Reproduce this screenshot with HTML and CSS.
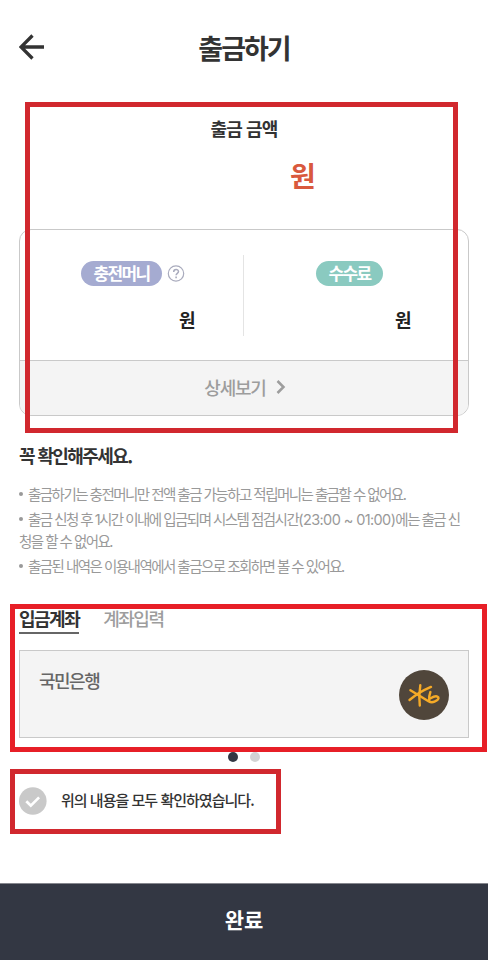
FILE: index.html
```html
<!DOCTYPE html>
<html lang="ko">
<head>
    <meta charset="UTF-8">
    <meta name="viewport" content="width=device-width, initial-scale=1.0">
    <title>출금하기</title>
    <link rel="stylesheet" href="styles.css">
</head>
<body>
    <div class="screen">
        <header class="header">
            <svg class="back" viewBox="0 0 26 26" width="26" height="26">
                <path d="M25 13H2.5M13.5 1.5L2 13l11.5 11.5" fill="none" stroke="#333" stroke-width="3.3"/>
            </svg>
            <h1>출금하기</h1>
        </header>

        <main class="content">
            <section class="amount">
                <h2>출금 금액</h2>
                <p class="total">원</p>
            </section>

            <section class="card">
                <div class="card-body">
                    <div class="card-col">
                        <div class="label-row">
                            <span class="pill pill-money">충전머니</span>
                            <svg class="help" viewBox="0 0 18 18" width="18" height="18" fill="none" stroke="#a9abbd">
                                <circle cx="9" cy="8.5" r="7.7" stroke-width="1.2"/>
                                <path d="M6.7 6.9C6.7 3.7 11.5 3.8 11.5 6.6C11.5 8.4 9.1 8.4 9.1 10.3" stroke-width="1.5"/>
                                <path d="M9.1 11.5v1.7" stroke-width="1.6"/>
                            </svg>
                        </div>
                        <p class="won">원</p>
                    </div>
                    <div class="card-col">
                        <div class="label-row">
                            <span class="pill pill-fee">수수료</span>
                        </div>
                        <p class="won">원</p>
                    </div>
                </div>
                <div class="card-more">
                    <span>상세보기</span>
                    <svg viewBox="0 0 10 14" width="10" height="14">
                        <path d="M1.5 1l6 6-6 6" fill="none" stroke="#9d9d9d" stroke-width="2.5"/>
                    </svg>
                </div>
            </section>

            <section class="notice">
                <h3>꼭 확인해주세요.</h3>
                <ul>
                    <li>출금하기는 충전머니만 전액 출금 가능하고 적립머니는 출금할 수 없어요.</li>
                    <li>출금 신청 후 1시간 이내에 입금되며 시스템 점검시간<span class="hours">(23:00 ~ 01:00)</span>에는 출금 신<br>청을 할 수 없어요.</li>
                    <li>출금된 내역은 이용내역에서 출금으로 조회하면 볼 수 있어요.</li>
                </ul>
            </section>

            <nav class="tabs">
                <span class="tab active">입금계좌</span>
                <span class="tab">계좌입력</span>
            </nav>

            <section class="bank">
                <span class="bank-name">국민은행</span>
                <svg class="bank-logo" viewBox="0 0 50 50" width="50" height="50">
                    <circle cx="25" cy="25" r="25" fill="#50463b"/>
                    <g fill="none" stroke="#f5aa27" stroke-width="2.4" stroke-linecap="round">
                        <path d="M21.3 15.2C20.2 22 20 29 20.8 35.5"/>
                        <path d="M11.4 20.2L29.5 31.2Q32.5 33 35.5 31.6Q40.4 29.6 39.3 27.3Q37.3 24.8 31.6 28.3"/>
                        <path d="M32 16.9Q20 22 10.5 30"/>
                        <path d="M31.4 22Q29.8 26 30.2 30.6"/>
                    </g>
                </svg>
            </section>

            <div class="dots">
                <span class="dot on"></span>
                <span class="dot"></span>
            </div>

            <div class="agree">
                <svg viewBox="0 0 28 28" width="28" height="28">
                    <circle cx="13.8" cy="14" r="13.8" fill="#c9c9c9"/>
                    <path d="M7.3 14.2l4.5 4.5 8.3-8.3" fill="none" stroke="#fff" stroke-width="2.7"/>
                </svg>
                <span>위의 내용을 모두 확인하였습니다.</span>
            </div>
        </main>

        <footer class="submit">완료</footer>

        <!-- highlight frames -->
        <div class="frame frame-amount"></div>
        <div class="frame frame-bank"></div>
        <div class="frame frame-agree"></div>
    </div>
</body>
</html>
```
FILE: styles.css
```css
* {
    box-sizing: border-box;
    margin: 0;
    padding: 0;
}

body {
    background-color: #fff;
    color: #333;
    font-family: 'Noto Sans CJK KR', sans-serif;
}

.screen {
    position: relative;
    display: flex;
    flex-direction: column;
    width: 488px;
    height: 960px;
    overflow: hidden;
}

.header {
    display: grid;
    grid-template-columns: 60px 1fr 60px;
    align-items: center;
    height: 96px;
    padding-bottom: 2px;
}

.back {
    margin-left: 19px;
}

h1 {
    padding-top: 1px;
    text-align: center;
    font-size: 27px;
    line-height: 40px;
    font-weight: 700;
    letter-spacing: -2px;
}

.content {
    flex: 1;
    padding: 0 19px;
}

.amount {
    height: 133px;
    padding-top: 17px;
    text-align: center;
}

h2 {
    font-size: 18px;
    line-height: 30px;
    font-weight: 700;
    letter-spacing: -0.9px;
}

.total {
    margin-top: 16px;
    padding-left: 118px;
    color: #d9593d;
    font-size: 28px;
    line-height: 32px;
    font-weight: 700;
}

.card {
    height: 187px;
    border: 1px solid #c9c9c9;
    border-radius: 12px;
    overflow: hidden;
}

.card-body {
    display: grid;
    grid-template-columns: 223px 1fr;
    height: 130px;
    padding: 25px 0 24px;
}

.card-col {
    padding-top: 6px;
}

.card-col + .card-col {
    border-left: 1px solid #e4e4e4;
}

.label-row {
    display: flex;
    align-items: center;
    gap: 5px;
    height: 25px;
    padding-left: 61px;
}

.card-col + .card-col .label-row {
    padding-left: 72px;
}

.pill {
    height: 25px;
    border-radius: 13px;
    color: #fff;
    text-align: center;
    font-size: 17px;
    line-height: 24px;
    font-weight: 700;
    letter-spacing: -1.6px;
}

.pill-money {
    width: 81px;
    background-color: #a5abd1;
}

.pill-fee {
    width: 67px;
    background-color: #8acac0;
}

.won {
    margin-top: 18px;
    padding-left: 159px;
    color: #222;
    font-size: 18px;
    line-height: 30px;
    font-weight: 700;
}

.card-col + .card-col .won {
    padding-left: 151px;
}

.card-more {
    display: flex;
    align-items: center;
    justify-content: center;
    gap: 10px;
    height: 56px;
    padding: 0 0 3px 2px;
    border-top: 1px solid #c9c9c9;
    background-color: #f4f4f4;
    color: #9d9d9d;
    font-size: 18px;
    line-height: 30px;
    font-weight: 500;
    letter-spacing: -1.2px;
}

.notice {
    height: 188px;
    padding-top: 24px;
}

h3 {
    font-size: 18px;
    line-height: 30px;
    font-weight: 700;
    letter-spacing: -1.6px;
}

ul {
    margin-top: 14px;
    list-style: none;
    color: #999;
    font-family: Inter, 'Noto Sans CJK KR', sans-serif;
    font-size: 14.5px;
    line-height: 22px;
}

li {
    margin-bottom: 3px;
    white-space: nowrap;
    letter-spacing: -1.53px;
}

li::before {
    content: "";
    display: inline-block;
    width: 4px;
    height: 4px;
    margin-right: 5px;
    border-radius: 50%;
    background-color: #999;
    vertical-align: 4px;
}

.hours {
    letter-spacing: -0.6px;
}

.tabs {
    display: flex;
    gap: 24px;
    height: 46px;
}

.tab {
    height: 30px;
    color: #9d9d9d;
    font-size: 18px;
    line-height: 29px;
    font-weight: 500;
    letter-spacing: -1.5px;
}

.tab.active {
    border-bottom: 2px solid #666;
    color: #333;
    font-weight: 700;
}

.bank {
    display: flex;
    justify-content: space-between;
    height: 88px;
    padding: 19px 19px 0;
    border: 1px solid #c9c9c9;
    background-color: #f4f4f4;
}

.bank-name {
    color: #666;
    font-size: 18px;
    line-height: 21px;
    font-weight: 500;
    letter-spacing: -1.5px;
}

.dots {
    display: flex;
    justify-content: center;
    gap: 12px;
    padding-top: 14px;
}

.dot {
    width: 10px;
    height: 10px;
    border-radius: 50%;
    background-color: #d3d3d3;
}

.dot.on {
    background-color: #333743;
}

.agree {
    display: flex;
    align-items: center;
    gap: 14px;
    margin-top: 25px;
    height: 28px;
    font-size: 15px;
    font-weight: 500;
    letter-spacing: -0.98px;
}

.agree span {
    padding-bottom: 3px;
}

.submit {
    height: 77px;
    border-top: 1px solid #85868d;
    background-color: #333743;
    color: #fff;
    text-align: center;
    font-size: 21px;
    line-height: 71px;
    font-weight: 700;
}

.frame {
    position: absolute;
    border: 5px solid #d1282e;
}

.frame-amount {
    top: 102px;
    left: 25px;
    width: 433px;
    height: 331px;
}

.frame-bank {
    top: 604px;
    left: 10px;
    width: 477px;
    height: 148px;
    border-color: #e71f27;
}

.frame-agree {
    top: 769px;
    left: 10px;
    width: 271px;
    height: 65px;
}
```
